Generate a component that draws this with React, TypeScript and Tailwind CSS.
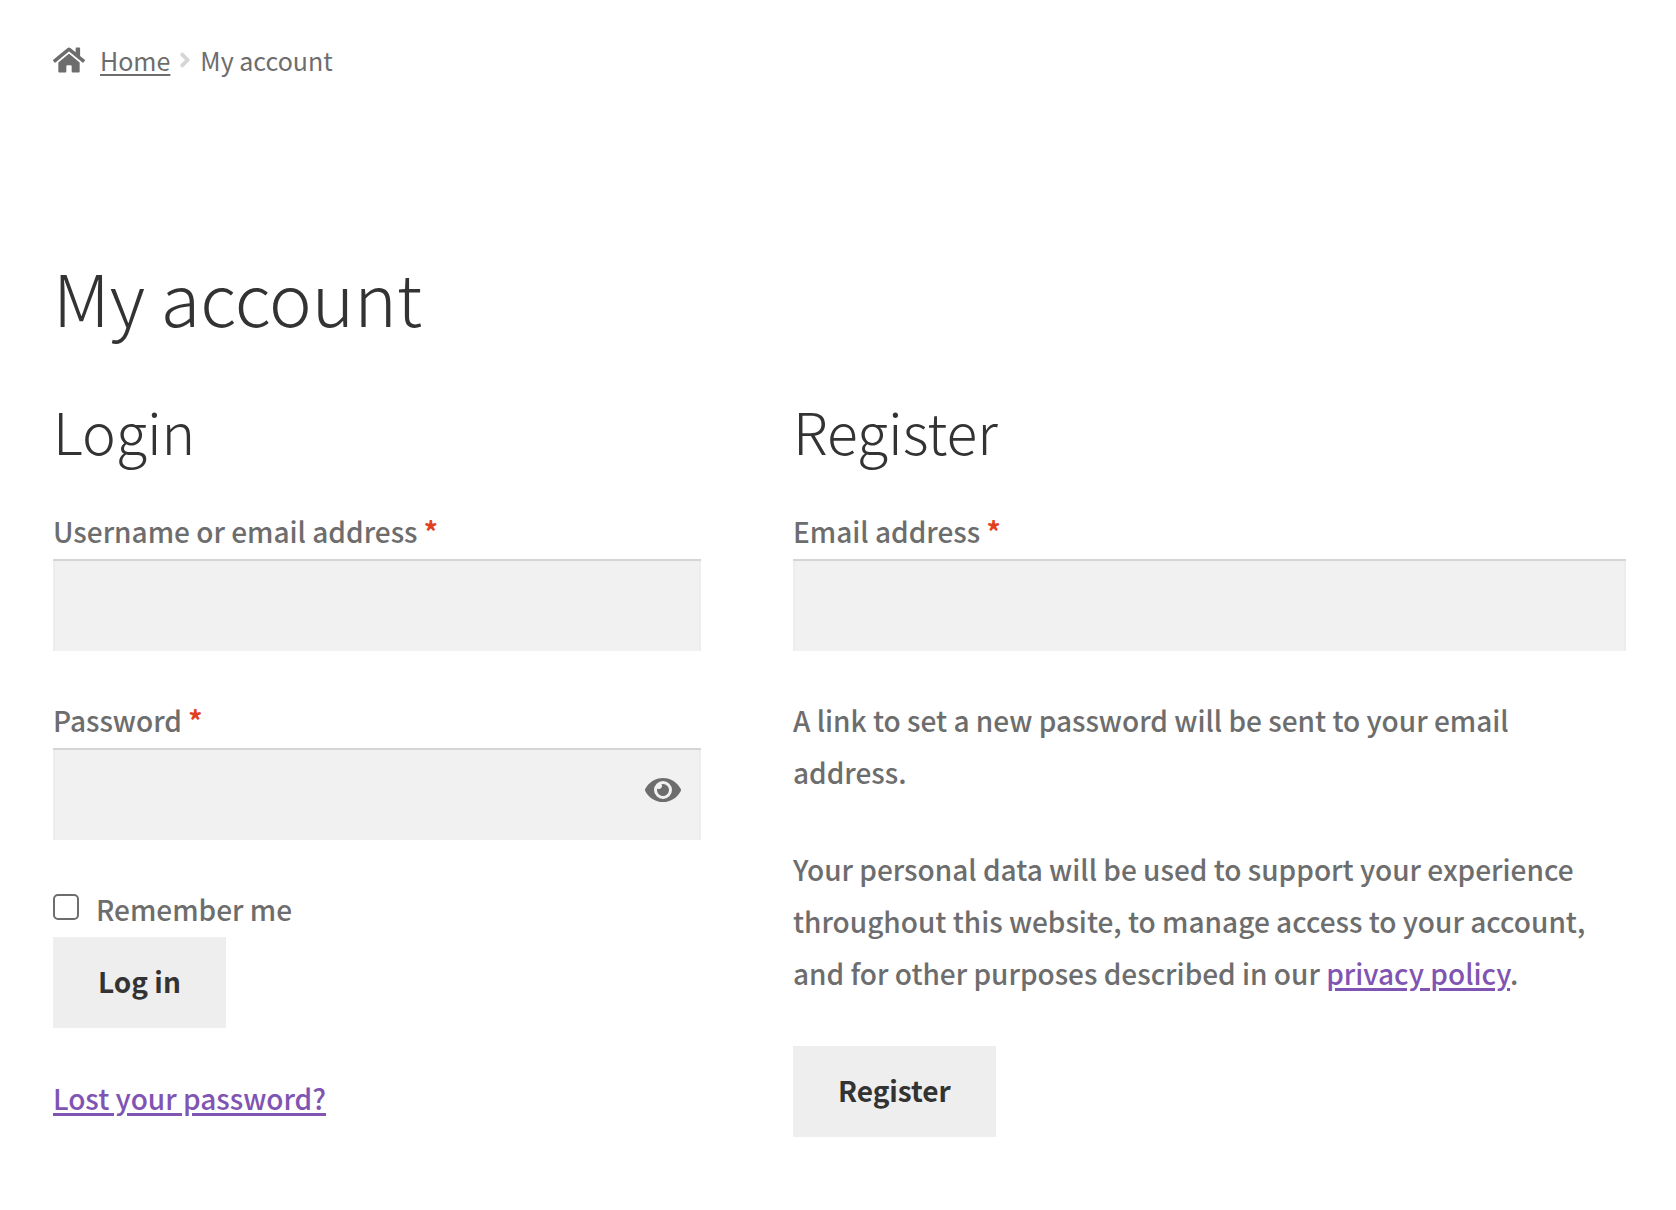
import { useState, type InputHTMLAttributes, type ReactNode } from "react";
import { FaAngleRight, FaEye, FaHome } from "react-icons/fa";
import clsx from "clsx";

const linkClass = "text-[#7f54b3] underline decoration-[3px] underline-offset-[3px]";

export default function App() {
  const [showPassword, setShowPassword] = useState(false);

  return (
    <div className="min-h-screen bg-white pr-[50px] pb-16 pl-[53px] font-['Noto_Sans_CJK_SC','Noto_Sans',sans-serif] text-[28px] leading-[52px] font-medium text-[#6d6d6d]">
      <nav aria-label="Breadcrumb" className="flex items-center pt-[34px] text-[25px] font-normal">
        <FaHome className="mr-[15px] h-8 w-8" />
        <a href="#home" className="underline decoration-2 underline-offset-[3px]">
          Home
        </a>
        <FaAngleRight className="mx-[3px] h-6 w-6 text-[#d5d5d5]" />
        <span>My account</span>
      </nav>

      <h1 className="mt-[162px] text-[72px] leading-[96px] font-light text-[#333333]">My account</h1>

      <div className="mt-[50px] grid grid-cols-[7fr_9fr] gap-x-[92px]">
        <section>
          <SectionTitle>Login</SectionTitle>
          <form className="flex flex-col" onSubmit={(e) => e.preventDefault()}>
            <Field id="username" label="Username or email address" autoComplete="username" />
            <Field
              id="password"
              label="Password"
              type={showPassword ? "text" : "password"}
              autoComplete="current-password"
              className="pr-20"
            >
              <button
                type="button"
                aria-label="Show password"
                onClick={() => setShowPassword(!showPassword)}
                className="absolute top-6 right-5"
              >
                <FaEye className="h-9 w-9" />
              </button>
            </Field>
            <label className="flex items-start gap-[17px]">
              <input
                type="checkbox"
                className="mt-[11px] h-[26px] w-[26px] appearance-none rounded-[5px] border-2 border-[#6d6d6d] bg-white checked:bg-[#6d6d6d]"
              />
              Remember me
            </label>
            <SubmitButton>Log in</SubmitButton>
          </form>
          <p className="mt-11">
            <a href="#lost-password" className={linkClass}>
              Lost your password?
            </a>
          </p>
        </section>

        <section>
          <SectionTitle>Register</SectionTitle>
          <form className="flex flex-col" onSubmit={(e) => e.preventDefault()}>
            <Field id="reg-email" label="Email address" type="email" autoComplete="email" />
            <p className="mb-[45px]">A link to set a new password will be sent to your email address.</p>
            <p className="mb-[45px]">
              Your personal data will be used to support your experience throughout this website, to manage
              access to your account, and for other purposes described in our{" "}
              <a href="#privacy" className={linkClass}>
                privacy policy
              </a>
              .
            </p>
            <SubmitButton>Register</SubmitButton>
          </form>
        </section>
      </div>
    </div>
  );
}

function SectionTitle({ children }: { children: ReactNode }) {
  return <h2 className="mb-[39px] text-[57px] leading-[72px] font-light text-[#333333]">{children}</h2>;
}

function SubmitButton({ children }: { children: ReactNode }) {
  return (
    <button
      type="submit"
      className="mt-0.5 self-start bg-[#eeeeee] px-[45px] pt-[18px] pb-[21px] font-bold text-[#333333]"
    >
      {children}
    </button>
  );
}

interface FieldProps extends InputHTMLAttributes<HTMLInputElement> {
  id: string;
  label: string;
}

function Field({ id, label, className, children, ...props }: FieldProps) {
  return (
    <div className="mb-[43px]">
      <label htmlFor={id} className="mb-0.5 block">
        {label} <span className="font-bold text-[#e2401c]">*</span>
      </label>
      <div className="relative">
        <input
          id={id}
          required
          className={clsx(
            "block h-[92px] w-full bg-[#f1f1f1] px-5 text-[#43454b] outline-none",
            "shadow-[inset_0_2px_0_#d5d5d5,inset_2px_0_0_#ededed,inset_-2px_0_0_#ededed]",
            className
          )}
          {...props}
        />
        {children}
      </div>
    </div>
  );
}
